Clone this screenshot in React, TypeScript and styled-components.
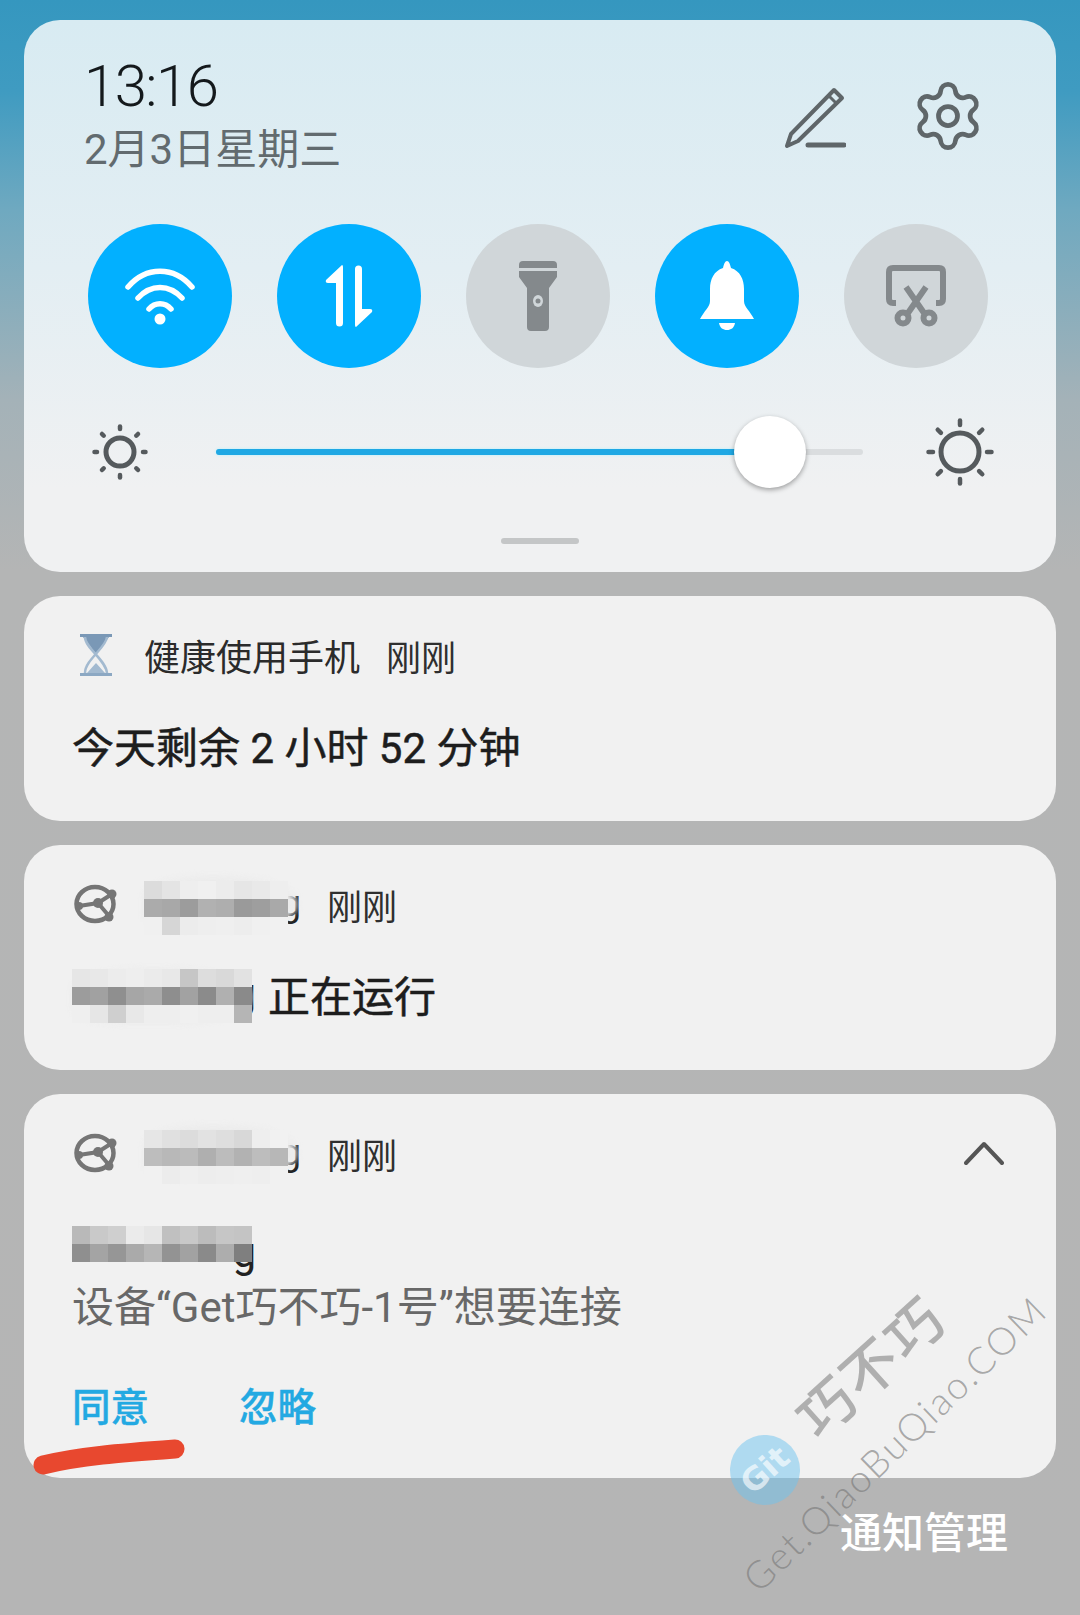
import { Settings } from "lucide-react";
import styled, { createGlobalStyle } from "styled-components";

const GlobalStyle = createGlobalStyle`
  html, body {
    margin: 0;
    padding: 0;
  }
  body {
    font-family: Roboto, "Noto Sans CJK SC", sans-serif;
  }
`;

const Page = styled.div`
  position: relative;
  width: 1080px;
  height: 1615px;
  overflow: hidden;
  box-sizing: border-box;
  padding: 20px 24px 0;
  display: flex;
  flex-direction: column;
  gap: 24px;
  background: linear-gradient(180deg, #3597bf 0, #3f9bc1 90px, #6fa9c0 210px, #a4b2b8 400px, #b4b5b5 570px, #b5b5b5 100%);
`;

const Panel = styled.section`
  height: 552px;
  box-sizing: border-box;
  padding: 36px 64px 0;
  border-radius: 36px;
  background: linear-gradient(180deg, #d8ebf2 0, #e3eef3 45%, #f0f1f2 85%);
  display: flex;
  flex-direction: column;
  flex: none;
`;

const Header = styled.div`
  display: flex;
  justify-content: space-between;
  align-items: center;
  height: 120px;
`;

const Clock = styled.div`
  display: flex;
  flex-direction: column;
  gap: 8px;
`;

const Time = styled.div`
  font-family: Roboto, sans-serif;
  font-weight: 300;
  font-size: 58px;
  line-height: 60px;
  letter-spacing: -1.5px;
  color: #14191c;
  margin-left: -4px;
`;

const DateLine = styled.div`
  font-family: Roboto, "Noto Sans CJK SC", sans-serif;
  font-weight: 400;
  font-size: 42px;
  line-height: 52px;
  color: #626b6f;
  margin-left: -4px;
`;

const HeaderActions = styled.div`
  display: flex;
  align-items: center;
  gap: 64px;
  margin-right: 6px;
  color: #5f6669;
`;

const PenGlyph = styled.svg`
  margin-top: 3px;
`;

const Toggles = styled.div`
  display: flex;
  gap: 45px;
  margin-top: 48px;
`;

const Toggle = styled.div<{ $on?: boolean }>`
  width: 144px;
  height: 144px;
  border-radius: 50%;
  flex: none;
  display: flex;
  align-items: center;
  justify-content: center;
  background: ${(p) => (p.$on ? "#02b0ff" : "#d0d6d9")};
  color: ${(p) => (p.$on ? "#ffffff" : "#84898c")};
`;

const BrightnessRow = styled.div`
  display: flex;
  align-items: center;
  height: 72px;
  margin-top: 48px;
  margin-left: 2px;
`;

const SunSlot = styled.div<{ $width: number }>`
  width: ${(p) => p.$width}px;
  display: flex;
  justify-content: center;
  color: #555a5d;
  flex: none;
`;

const Track = styled.div`
  position: relative;
  width: 647px;
  height: 6px;
  margin: 0 61px 0 66px;
  border-radius: 3px;
  background: #dadddf;
  flex: none;
`;

const TrackFill = styled.div`
  height: 100%;
  border-radius: 3px;
  background: #1fa8e4;
  box-shadow: 0 0 3px #b4f0ff;
`;

const Thumb = styled.div`
  position: absolute;
  top: -33px;
  left: 518px;
  width: 72px;
  height: 72px;
  border-radius: 50%;
  background: #ffffff;
  box-shadow: 0 2px 5px rgba(0, 0, 0, 0.35);
`;

const Handle = styled.div`
  align-self: center;
  width: 78px;
  height: 6px;
  margin-top: 50px;
  border-radius: 3px;
  background: #c4c6c7;
`;

const Card = styled.article<{ $height: number }>`
  height: ${(p) => p.$height}px;
  box-sizing: border-box;
  padding: 34px 48px 0;
  border-radius: 36px;
  background: #f1f1f1;
  display: flex;
  flex-direction: column;
  flex: none;
`;

const TitleRow = styled.div`
  display: flex;
  align-items: center;
  height: 50px;
  font-size: 36px;
  color: #2b2b2b;
`;

const IconSlot = styled.div`
  width: 48px;
  margin-right: 24px;
  display: flex;
  justify-content: center;
  flex: none;
`;

const Since = styled.span`
  margin-left: 26px;
  font-size: 35px;
  color: #2f2f2f;
`;

const Collapse = styled.svg`
  margin-left: auto;
  margin-right: 4px;
`;

const Body = styled.div`
  margin-top: 36px;
  display: flex;
  align-items: center;
  gap: 12px;
  height: 56px;
  font-size: 42px;
  font-weight: 400;
  -webkit-text-stroke: 0.5px #1d1d1d;
  color: #1d1d1d;
  white-space: pre;
`;

const SoloBody = styled(Body)`
  margin-top: 50px;
  height: 46px;
  align-items: flex-start;
`;

const Detail = styled.div`
  margin-top: 8px;
  font-size: 42px;
  line-height: 52px;
  color: #686868;
  white-space: pre;
`;

const Actions = styled.div`
  display: flex;
  gap: 90px;
  margin-top: 48px;
`;

const ActionLink = styled.span`
  font-size: 38.5px;
  line-height: 52px;
  font-weight: 500;
  -webkit-text-stroke: 0.4px #23a9e2;
  color: #23a9e2;
`;

const Redacted = styled.span<{ $width: number }>`
  position: relative;
  display: inline-block;
  width: ${(p) => p.$width}px;
  text-align: right;
  color: #222;
  -webkit-text-stroke: 0;
  flex: none;
`;

const Smudge = styled.span<{ $top: number; $height: number }>`
  position: absolute;
  left: 0;
  right: 4px;
  top: ${(p) => p.$top}px;
  height: ${(p) => p.$height}px;
  border-radius: 40% 50% 45% 30%;
  background: #ebebeb;
  filter: blur(3px);
`;

const Mosaic = styled.span<{ $top: number; $cols: number }>`
  position: absolute;
  left: 0;
  top: ${(p) => p.$top}px;
  display: grid;
  grid-template-columns: repeat(${(p) => p.$cols}, 18px);
  grid-auto-rows: 18px;
`;

const Tile = styled.i<{ $shade: string }>`
  display: block;
  background: ${(p) => p.$shade};
`;

const Footer = styled.div`
  display: flex;
  justify-content: flex-end;
  padding: 3px 48px 0 0;
  font-size: 42px;
  line-height: 58px;
  font-weight: 500;
  color: #ffffff;
`;

const Scribble = styled.svg`
  position: absolute;
  left: 30px;
  top: 1432px;
`;

const GitBadge = styled.div`
  position: absolute;
  left: 730px;
  top: 1435px;
  width: 70px;
  height: 70px;
  border-radius: 50%;
  background: rgba(110, 195, 240, 0.5);
  display: flex;
  align-items: center;
  justify-content: center;
  transform: rotate(-42deg);
  font-family: "DejaVu Sans", sans-serif;
  font-weight: 700;
  font-size: 32px;
  color: rgba(255, 255, 255, 0.65);
`;

const MarkName = styled.div`
  position: absolute;
  left: 780px;
  top: 1324px;
  width: 180px;
  transform: rotate(-42deg);
  font-family: "Noto Sans CJK SC", sans-serif;
  font-weight: 500;
  font-size: 56px;
  line-height: 80px;
  letter-spacing: 3px;
  white-space: nowrap;
  color: rgba(140, 140, 140, 0.65);
`;

const MarkUrl = styled.div`
  position: absolute;
  left: 689px;
  top: 1419px;
  width: 410px;
  text-align: center;
  transform: rotate(-44deg);
  font-family: Lato, sans-serif;
  font-weight: 300;
  font-size: 38px;
  line-height: 48px;
  letter-spacing: 2.2px;
  white-space: nowrap;
  color: rgba(120, 120, 120, 0.62);
`;

const PenIcon = () => (
  <PenGlyph width="62" height="62" viewBox="0 0 62 62" fill="none" stroke="currentColor" strokeWidth="4" strokeLinejoin="round" strokeLinecap="round">
    <path d="M50 3 L58 11 L14 54 L3 59 L7 47 Z" />
    <path d="M45 9 L52 16" strokeWidth="3" />
    <path d="M24 58 H60" strokeWidth="5" />
  </PenGlyph>
);

const WifiIcon = () => (
  <svg width="72" height="58" viewBox="0 0 72 58" fill="none" stroke="currentColor" strokeWidth="5.5" strokeLinecap="round">
    <path d="M4 20 C 22 -1, 50 -1, 68 20" />
    <path d="M14 31 C 27 17, 45 17, 58 31" />
    <path d="M25 42 C 31 35, 41 35, 47 42" />
    <circle cx="36" cy="52" r="5.5" fill="currentColor" stroke="none" />
  </svg>
);

const TransferIcon = () => (
  <svg width="48" height="64" viewBox="0 0 48 64" fill="currentColor">
    <path d="M17 1 Q18 1 18 3 V59 a3.5 3.5 0 0 1 -7 0 V19 H3 Q0 19 1 16 Z" />
    <path d="M31 63 Q30 63 30 61 V5 a3.5 3.5 0 0 1 7 0 V45 H45 Q48 45 47 48 Z" />
  </svg>
);

const TorchIcon = () => (
  <svg width="38" height="70" viewBox="0 0 38 70">
    <path fill="currentColor" d="M4 0 H34 Q38 0 38 4 V7 H0 V4 Q0 0 4 0 Z" />
    <path fill="currentColor" d="M0 10 H38 V16 L30 27 V66 Q30 70 26 70 H12 Q8 70 8 66 V27 L0 16 Z" />
    <ellipse cx="19" cy="40" rx="5" ry="6" fill="#d0d6d9" />
    <circle cx="19" cy="40" r="2.5" fill="currentColor" />
  </svg>
);

const BellIcon = () => (
  <svg width="56" height="70" viewBox="0 0 56 70" fill="currentColor">
    <path d="M28 0 C30 0 31 3 32 7 C41 10 45 18 45 28 V40 C45 46 51 50 55 58 H1 C5 50 11 46 11 40 V28 C11 18 15 10 24 7 C25 3 26 0 28 0 Z" />
    <path d="M20 62 H36 C35 67 32 69 28 69 C24 69 21 67 20 62 Z" />
  </svg>
);

const CutIcon = () => (
  <svg width="60" height="62" viewBox="0 0 60 62" fill="none" stroke="currentColor" strokeWidth="6">
    <path d="M10 38 H7 Q3 38 3 34 V7 Q3 3 7 3 H53 Q57 3 57 7 V34 Q57 38 53 38 H50" />
    <path d="M20 22 L38 48 M40 22 L22 48" />
    <circle cx="17" cy="53" r="5.5" />
    <circle cx="43" cy="53" r="5.5" />
  </svg>
);

const Sun = ({ size, core, ray, inner, outer }: { size: number; core: number; ray: number; inner: number; outer: number }) => (
  <svg width={size} height={size} viewBox={`${-size / 2} ${-size / 2} ${size} ${size}`} fill="none" stroke="currentColor" strokeLinecap="round">
    <circle r={core} strokeWidth={ray + 0.5} />
    {[0, 45, 90, 135, 180, 225, 270, 315].map((deg) => (
      <line key={deg} y1={-inner} y2={-outer} strokeWidth={ray} transform={`rotate(${deg})`} />
    ))}
  </svg>
);

const HourglassIcon = () => (
  <svg width="32" height="42" viewBox="0 0 32 42">
    <rect width="32" height="3" fill="#7a98b6" />
    <path d="M3 3 H29 L16 20 Z" fill="#7a98b6" />
    <path d="M5 3 C5 14 26 26 27 39 M27 3 C26 14 5 26 5 39" fill="none" stroke="#a3bad0" strokeWidth="2.5" />
    <path d="M7 39 L16 29 L25 39 Z" fill="#a3bad0" />
    <rect y="39" width="32" height="3" fill="#8ca8c3" />
  </svg>
);

const LinkAppIcon = () => (
  <svg width="44" height="40" viewBox="0 0 44 40" fill="none" stroke="#757575" strokeWidth="4.5">
    <ellipse cx="21" cy="20" rx="18.5" ry="17" />
    <path d="M5 22 L24 19 L38 10 M24 19 L35 32" strokeWidth="4" />
    <circle cx="38" cy="10" r="4.5" fill="#757575" stroke="none" />
    <circle cx="35" cy="33" r="4.5" fill="#757575" stroke="none" />
    <circle cx="5" cy="22" r="4" fill="#757575" stroke="none" />
    <circle cx="24" cy="19" r="5" fill="#757575" stroke="none" />
  </svg>
);

const titleTilesA = [
  "#dcdcdc", "#e4e4e4", "#eeeeee", "#f0f0f0", "#ececec", "#e6e6e6", "#e9e9e9", "#eeeeee",
  "#ababab", "#a8a8a8", "#9c9c9c", "#b1b1b1", "#aeaeae", "#9a9a9a", "#9e9e9e", "#a9a9a9",
  "#f0f0f0", "#d6d6d6", "#ececec", "#eeeeee", "#efefef", "#ededed", "#f0f0f0", "#f1f1f1",
];
const bodyTilesA = [
  "#e6e6e6", "#e8e8e8", "#ececec", "#eeeeee", "#ebebeb", "#e8e8e8", "#c6c6c6", "#dddddd", "#d9d9d9", "#e2e2e2",
  "#9c9c9c", "#a1a1a1", "#8f8f8f", "#a6a6a6", "#aaaaaa", "#8e8e8e", "#a2a2a2", "#8b8b8b", "#b0b0b0", "#8a8a8a",
  "#efefef", "#e6e6e6", "#cfcfcf", "#e8e8e8", "#eeeeee", "#eeeeee", "#f0f0f0", "#eeeeee", "#eeeeee", "#b5b5b5",
];
const titleTilesB = [
  "#e6e6e6", "#e0e0e0", "#dcdcdc", "#e2e2e2", "#dedede", "#d8d8d8", "#eeeeee", "#f1f1f1",
  "#bdbdbd", "#b8b8b8", "#bbbbbb", "#afafaf", "#bcbcbc", "#b2b2b2", "#bdbdbd", "#b7b7b7",
  "#f1f1f1", "#ececec", "#efefef", "#ededed", "#eeeeee", "#efefef", "#eeeeee", "#f1f1f1",
];
const bodyTilesB = [
  "#b9b9b9", "#c9c9c9", "#cfcfcf", "#ebebeb", "#e6e6e6", "#c0c0c0", "#c8c8c8", "#bcbcbc", "#c6c6c6", "#c4c4c4",
  "#8f8f8f", "#a4a4a4", "#969696", "#aaaaaa", "#b6b6b6", "#939393", "#a2a2a2", "#8a8a8a", "#adadad", "#7f7f7f",
];

const Pixelated = ({ tiles, cols, top }: { tiles: string[]; cols: number; top: number }) => (
  <Mosaic $top={top} $cols={cols}>
    {tiles.map((shade, i) => (
      <Tile key={i} $shade={shade} />
    ))}
  </Mosaic>
);

export default function App() {
  return (
    <>
      <GlobalStyle />
      <Page>
        <Panel>
          <Header>
            <Clock>
              <Time>13:16</Time>
              <DateLine>2月3日星期三</DateLine>
            </Clock>
            <HeaderActions>
              <PenIcon />
              <Settings size={76} strokeWidth={1.5} />
            </HeaderActions>
          </Header>
          <Toggles>
            <Toggle $on>
              <WifiIcon />
            </Toggle>
            <Toggle $on>
              <TransferIcon />
            </Toggle>
            <Toggle>
              <TorchIcon />
            </Toggle>
            <Toggle $on>
              <BellIcon />
            </Toggle>
            <Toggle>
              <CutIcon />
            </Toggle>
          </Toggles>
          <BrightnessRow>
            <SunSlot $width={60}>
              <Sun size={58} core={14} ray={4.5} inner={23} outer={25.5} />
            </SunSlot>
            <Track>
              <TrackFill style={{ width: `${(540 / 647) * 100}%` }} />
              <Thumb />
            </Track>
            <SunSlot $width={72}>
              <Sun size={70} core={19} ray={4.5} inner={27} outer={31.5} />
            </SunSlot>
          </BrightnessRow>
          <Handle />
        </Panel>

        <Card $height={225}>
          <TitleRow>
            <IconSlot>
              <HourglassIcon />
            </IconSlot>
            健康使用手机
            <Since>刚刚</Since>
          </TitleRow>
          <Body>今天剩余 2 小时 52 分钟</Body>
        </Card>

        <Card $height={225}>
          <TitleRow>
            <IconSlot>
              <LinkAppIcon />
            </IconSlot>
            <Redacted $width={157}>
              g
              <Smudge $top={-6} $height={52} />
              <Pixelated tiles={titleTilesA} cols={8} top={-2} />
            </Redacted>
            <Since>刚刚</Since>
          </TitleRow>
          <Body>
            <Redacted $width={184}>
              g
              <Smudge $top={0} $height={54} />
              <Pixelated tiles={bodyTilesA} cols={10} top={0} />
            </Redacted>
            正在运行
          </Body>
        </Card>

        <Card $height={384}>
          <TitleRow>
            <IconSlot>
              <LinkAppIcon />
            </IconSlot>
            <Redacted $width={157}>
              g
              <Smudge $top={-6} $height={52} />
              <Pixelated tiles={titleTilesB} cols={8} top={-2} />
            </Redacted>
            <Since>刚刚</Since>
            <Collapse width="40" height="24" viewBox="0 0 40 24" fill="none" stroke="#555555" strokeWidth="4" strokeLinecap="round" strokeLinejoin="round">
              <path d="M2 22 L20 3 L38 22" />
            </Collapse>
          </TitleRow>
          <SoloBody>
            <Redacted $width={184}>
              g
              <Pixelated tiles={bodyTilesB} cols={10} top={-2} />
            </Redacted>
          </SoloBody>
          <Detail>设备“Get巧不巧-1号”想要连接</Detail>
          <Actions>
            <ActionLink>同意</ActionLink>
            <ActionLink>忽略</ActionLink>
          </Actions>
        </Card>

        <Footer>通知管理</Footer>

        <Scribble width="160" height="44" viewBox="0 0 160 44" fill="none">
          <path d="M13 33 C 50 24, 90 21, 145 17" stroke="#e8482f" strokeWidth="19" strokeLinecap="round" />
        </Scribble>
        <GitBadge>Git</GitBadge>
        <MarkName>巧不巧</MarkName>
        <MarkUrl>Get.QiaoBuQiao.COM</MarkUrl>
      </Page>
    </>
  );
}
